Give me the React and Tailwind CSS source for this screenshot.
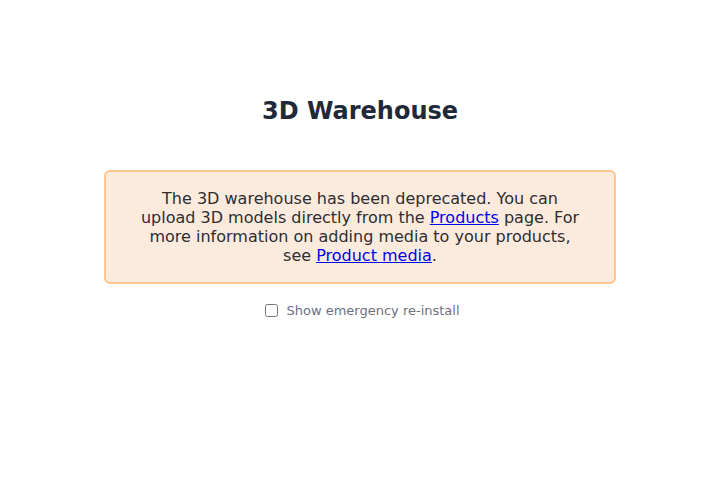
export default function App() {
    return (
        <div className="min-h-[480px] bg-white flex flex-col items-center pt-[95px] font-['DejaVu_Sans',sans-serif]">
            <h1 className="text-2xl leading-8 font-bold text-[#1f2937]">3D Warehouse</h1>
            <div className="mt-[43px] w-[512px] rounded-md border-2 border-[#fdc68f] bg-[#fcebdc] px-8 py-[17px] text-center text-base leading-[19px] text-[#2d2d33]">
                The 3D warehouse has been deprecated. You can upload 3D models directly from the{" "}
                <a href="#" className="text-[#0000ee] underline">Products</a> page. For more information on adding media to your products, see{" "}
                <a href="#" className="text-[#0000ee] underline">Product media</a>.
            </div>
            <label className="mt-[17px] ml-1 flex items-center gap-2 text-[13px] leading-5 text-[#6b7280]">
                <input type="checkbox" className="w-[13px] h-[13px] ml-[1px] -mt-[2px]" />
                Show emergency re-install
            </label>
        </div>
    )
}
